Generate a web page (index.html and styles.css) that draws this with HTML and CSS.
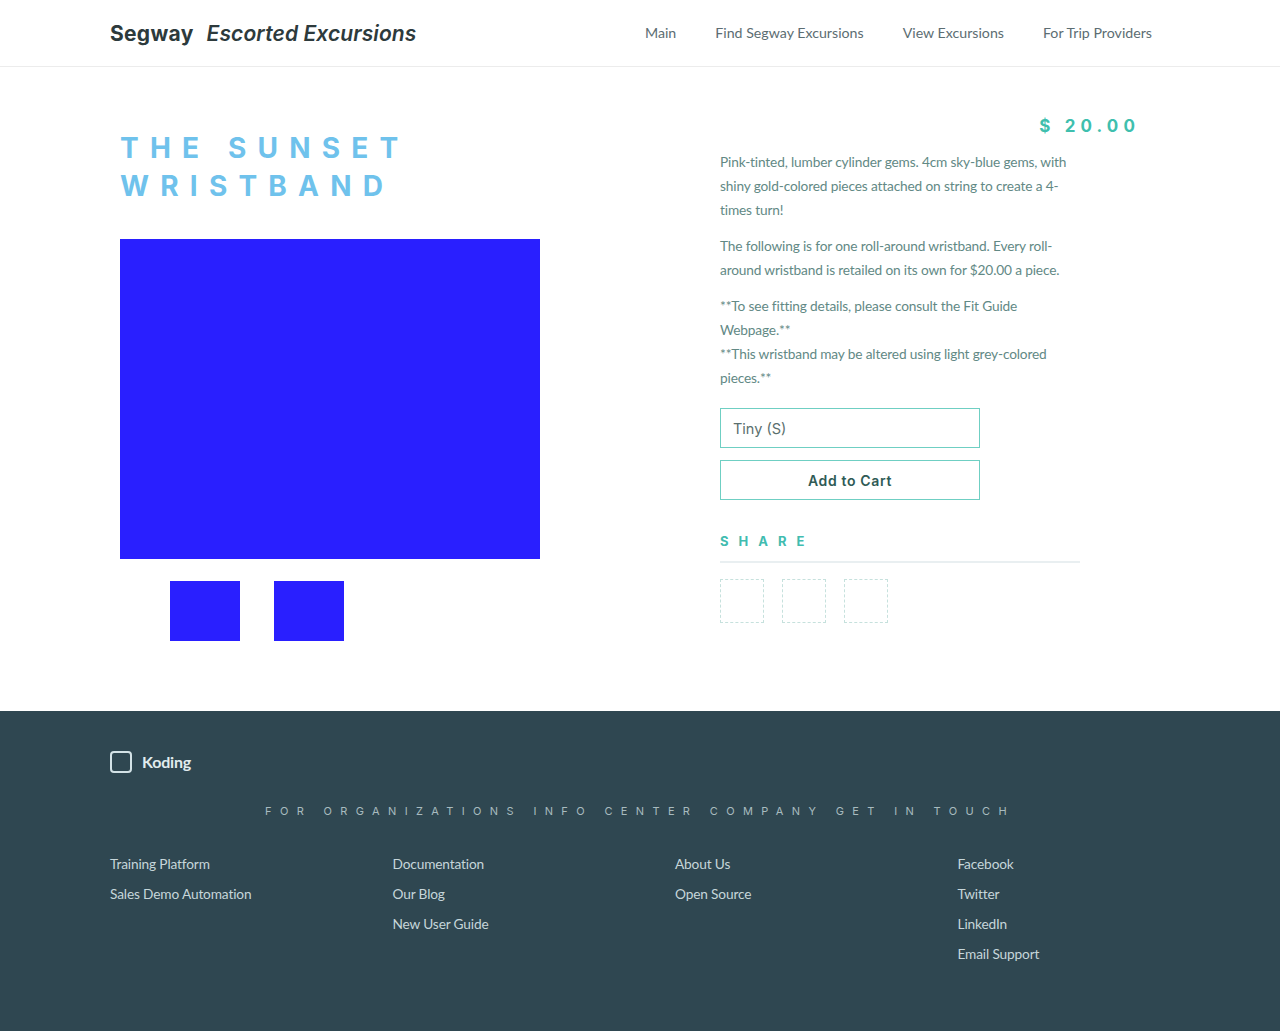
FILE: index.html
```
<!DOCTYPE html>
<html lang="en">
<head>
<meta charset="utf-8">
<title>The Sunset Wristband</title>
<link rel="stylesheet" href="styles.css">
</head>
<body>
<header class="site-header">
  <div class="container header-inner">
    <a class="brand" href="#"><span class="brand-main">Segway</span><span class="brand-sub">Escorted Excursions</span></a>
    <nav class="nav">
      <a href="#">Main</a>
      <a href="#">Find Segway Excursions</a>
      <a href="#">View Excursions</a>
      <a href="#">For Trip Providers</a>
    </nav>
  </div>
</header>

<main class="product">
  <div class="product-grid">
    <div class="gallery">
      <h1 class="title">THE SUNSET WRISTBAND</h1>
      <div class="main-image"></div>
      <div class="thumbs">
        <div class="thumb"></div>
        <div class="thumb"></div>
      </div>
    </div>
    <div class="details">
      <div class="price">$ 20.00</div>
      <p>Pink-tinted, lumber cylinder gems. 4cm sky-blue gems, with shiny gold-colored pieces attached on string to create a 4-times turn!</p>
      <p>The following is for one roll-around wristband. Every roll-around wristband is retailed on its own for $20.00 a piece.</p>
      <p>**To see fitting details, please consult the Fit Guide Webpage.**<br>**This wristband may be altered using light grey-colored pieces.**</p>
      <div class="select">Tiny (S)</div>
      <button class="cart" type="button">Add to Cart</button>
      <h2 class="share-title">SHARE</h2>
      <div class="share-icons">
        <span class="share-box"></span>
        <span class="share-box"></span>
        <span class="share-box"></span>
      </div>
    </div>
  </div>
</main>

<footer class="site-footer">
  <div class="container">
    <div class="footer-brand"><span class="logo-box"></span><span class="logo-text">Koding</span></div>
    <div class="footer-heads">FOR ORGANIZATIONS INFO CENTER COMPANY GET IN TOUCH</div>
    <div class="footer-cols">
      <ul>
        <li><a href="#">Training Platform</a></li>
        <li><a href="#">Sales Demo Automation</a></li>
      </ul>
      <ul>
        <li><a href="#">Documentation</a></li>
        <li><a href="#">Our Blog</a></li>
        <li><a href="#">New User Guide</a></li>
      </ul>
      <ul>
        <li><a href="#">About Us</a></li>
        <li><a href="#">Open Source</a></li>
      </ul>
      <ul>
        <li><a href="#">Facebook</a></li>
        <li><a href="#">Twitter</a></li>
        <li><a href="#">LinkedIn</a></li>
        <li><a href="#">Email Support</a></li>
      </ul>
    </div>
  </div>
</footer>
</body>
</html>
```
FILE: styles.css
```
* { box-sizing: border-box; }
html, body { margin: 0; padding: 0; }
body {
  font-family: "Lato", "Open Sans", sans-serif;
  background: #fff;
  color: #5f8783;
}
a { text-decoration: none; color: inherit; }

.container {
  width: 1060px;
  margin: 0 auto;
}

/* header */
.site-header {
  border-bottom: 1px solid #ececec;
}
.header-inner {
  height: 66px;
  display: flex;
  align-items: center;
  justify-content: space-between;
}
.brand {
  font-family: "Inter", sans-serif;
  color: #2d3a3c;
  font-size: 21px;
  display: flex;
  align-items: baseline;
  gap: 13px;
}
.brand-main { font-weight: 700; letter-spacing: 0.3px; }
.brand-sub { font-weight: 600; font-style: italic; letter-spacing: 0.1px; }
.nav {
  display: flex;
  gap: 39px;
  padding-right: 18px;
  margin-top: -2px;
}
.nav a {
  font-size: 14.2px;
  color: #5c6d72;
}

/* product */
.product {
  padding: 47px 0 70px;
}
.product-grid {
  width: 1040px;
  margin: 0 auto;
  display: grid;
  grid-template-columns: 420px 420px;
  column-gap: 180px;
}
.title {
  margin: 15px 0 34px;
  font-family: "Inter", sans-serif;
  font-weight: 700;
  font-size: 28px;
  line-height: 38px;
  letter-spacing: 0.4em;
  color: #6fc2ec;
}
.main-image {
  width: 420px;
  height: 320px;
  background: #291fff;
}
.thumbs {
  display: flex;
  gap: 34px;
  padding-left: 50px;
  margin-top: 22px;
}
.thumb {
  width: 70px;
  height: 60px;
  background: #291fff;
}

.details p {
  width: 360px;
  margin: 0 0 12px;
  font-size: 13.7px;
  letter-spacing: -0.15px;
  line-height: 24px;
  color: #628985;
}
.price {
  text-align: right;
  font-family: "Inter", sans-serif;
  font-weight: 700;
  font-size: 17px;
  line-height: 24px;
  letter-spacing: 0.3em;
  color: #3fbfae;
  margin: 0 0 12px;
}
.select {
  width: 260px;
  height: 40px;
  border: 1px solid #6fcfc3;
  margin-top: 18px;
  padding: 0 12px;
  display: flex;
  align-items: center;
  font-family: "Inter", sans-serif;
  font-size: 14.5px;
  color: #5b6f6e;
}
.cart {
  display: block;
  width: 260px;
  height: 40px;
  margin-top: 12px;
  border: 1px solid #6fcfc3;
  background: #fff;
  font-family: "Inter", sans-serif;
  font-weight: 600;
  font-size: 14px;
  letter-spacing: 0.65px;
  color: #2f5b56;
}
.share-title {
  width: 360px;
  margin: 33px 0 0;
  padding-bottom: 12px;
  border-bottom: 2px solid #e9eff1;
  font-family: "Inter", sans-serif;
  font-weight: 700;
  font-size: 13px;
  line-height: 16px;
  letter-spacing: 10px;
  color: #41bcb0;
}
.share-icons {
  display: flex;
  gap: 18px;
  margin-top: 16px;
}
.share-box {
  width: 44px;
  height: 44px;
  border: 1px dashed #c6e1dd;
}

/* footer */
.site-footer {
  background: #2f4751;
  padding: 40px 0 64px;
}
.footer-brand {
  display: flex;
  align-items: center;
  gap: 10px;
}
.logo-box {
  width: 22px;
  height: 22px;
  border: 2px solid #d3e2e6;
  border-radius: 4px;
}
.logo-text {
  font-weight: 700;
  font-size: 16px;
  letter-spacing: -0.2px;
  color: #e1ecee;
  margin-top: -2px;
}
.footer-heads {
  margin-top: 31px;
  text-align: center;
  font-family: "Inter", sans-serif;
  font-size: 11px;
  letter-spacing: 0.76em;
  color: #a8bbbf;
}
.footer-cols {
  margin-top: 31px;
  display: grid;
  grid-template-columns: repeat(4, 1fr);
  column-gap: 70px;
}
.footer-cols ul {
  list-style: none;
  margin: 0;
  padding: 0;
}
.footer-cols li {
  font-size: 13.7px;
  letter-spacing: -0.15px;
  line-height: 30px;
  color: #c6d6da;
}
```
